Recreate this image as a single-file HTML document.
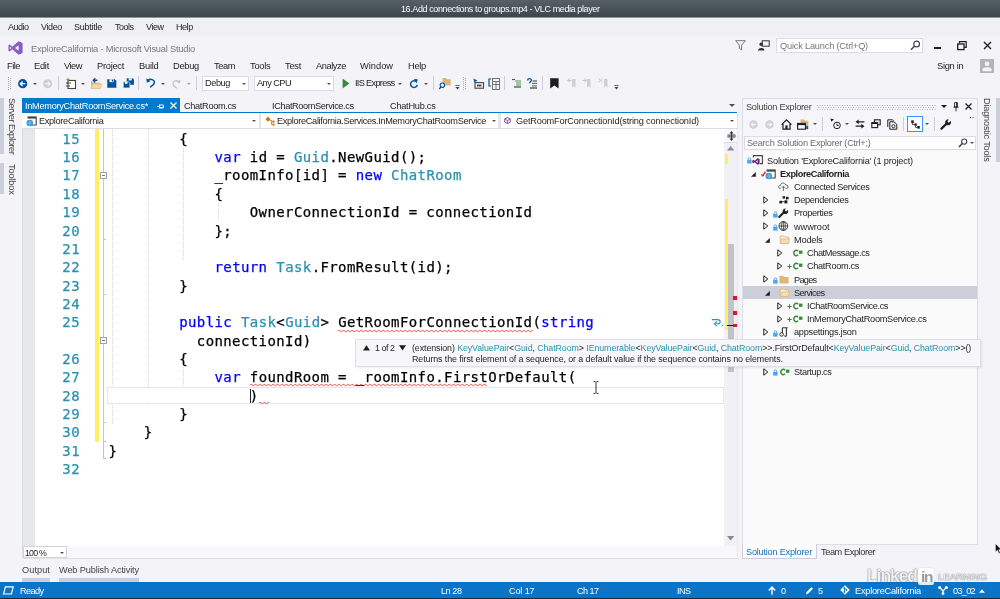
<!DOCTYPE html>
<html><head><meta charset="utf-8"><title>VLC media player</title>
<style>
html,body{margin:0;padding:0;}
body{width:1000px;height:599px;overflow:hidden;position:relative;background:#f4f4f8;font-family:"Liberation Sans",sans-serif;font-size:9.2px;color:#1e1e1e;}
.a{position:absolute;}
.t{position:absolute;white-space:nowrap;line-height:12px;height:12px;will-change:transform;}
.t i{font-style:normal;color:#2b91af;}
svg{position:absolute;overflow:visible;}
#code{will-change:transform;-webkit-text-stroke:0.25px;font-family:"DejaVu Sans Mono","Liberation Mono",monospace;font-size:14px;letter-spacing:0.401px;color:#000;}
.ln{position:absolute;left:30px;width:50px;text-align:right;color:#2b91af;height:18.355px;line-height:18.355px;white-space:pre;}
.cl{position:absolute;left:108.5px;height:18.355px;line-height:18.355px;white-space:pre;color:#000;}
.k{color:#0000ff;}
.ty{color:#2b91af;}
.sep{position:absolute;width:1px;height:14px;top:76px;background:#cccedb;}
.dd{position:absolute;width:0;height:0;border-left:2.2px solid transparent;border-right:2.2px solid transparent;border-top:2.6px solid #505050;margin-left:0.3px;margin-top:0.2px;}
.ig{position:absolute;width:0;border-left:1px dotted #d8d8d8;}
</style></head><body>
<!-- VLC chrome -->
<div class="a" style="left:0;top:0;width:1000px;height:17px;background:linear-gradient(#566068,#3e464c)"></div>
<div class="a" style="left:0;top:17px;width:1000px;height:1px;background:#3daee9"></div>
<div class="a" style="left:0;top:18px;width:1000px;height:18px;background:#eff0f1"></div>
<!-- VS logo -->
<svg style="left:8px;top:41px" width="15" height="14" viewBox="0 0 15 14"><path d="M10.6 0.3 L14.6 1.9 L14.6 12.1 L10.6 13.7 L4.3 8.3 L1.6 10.4 L0.4 9.8 L0.4 4.2 L1.6 3.6 L4.3 5.7 Z M10.6 4.2 L7 7 L10.6 9.8 Z M1.7 5.5 L1.7 8.5 L3.3 7 Z" fill="#865fc5" fill-rule="evenodd"/></svg>

<!-- title right controls -->
<svg style="left:735px;top:40px" width="11" height="11" viewBox="0 0 11 11"><path d="M0.7 0.7 H10.3 L6.6 5.2 V9.8 L4.4 8.4 V5.2 Z" fill="none" stroke="#6a6a6a" stroke-width="0.9"/></svg>
<svg style="left:758px;top:40px" width="12" height="11" viewBox="0 0 12 11"><rect x="4.2" y="0.8" width="7" height="5.4" fill="none" stroke="#333" stroke-width="1"/><circle cx="3.2" cy="4.2" r="1.8" fill="#333"/><path d="M0 10.5 C0 7 6.4 7 6.4 10.5 Z" fill="#333"/></svg>
<div class="a" style="left:776px;top:37.5px;width:147px;height:15px;background:#fff;border:0.8px solid #dcdce4;box-sizing:border-box"></div>
<svg style="left:910px;top:40px" width="11" height="11" viewBox="0 0 11 11"><circle cx="6.6" cy="4" r="2.9" fill="none" stroke="#444" stroke-width="1.2"/><path d="M4.6 6 L1 9.8" stroke="#444" stroke-width="1.5"/></svg>
<div class="a" style="left:934px;top:46.5px;width:7px;height:2px;background:#1e1e1e"></div>
<svg style="left:957px;top:41px" width="10" height="10" viewBox="0 0 10 10"><path d="M2.5 2.5 V0.7 H9.2 V6.3 H7.3" fill="none" stroke="#1e1e1e" stroke-width="1.2"/><rect x="0.7" y="3" width="6.3" height="5.6" fill="none" stroke="#1e1e1e" stroke-width="1.3"/></svg>
<svg style="left:983px;top:41px" width="9" height="9" viewBox="0 0 9 9"><path d="M1 1 L8 8 M8 1 L1 8" stroke="#1e1e1e" stroke-width="1.4"/></svg>
<svg style="left:980px;top:59px" width="14" height="14" viewBox="0 0 14 14"><rect x="0" y="0" width="14" height="14" fill="#b4b4b8"/><circle cx="7" cy="4.8" r="2.4" fill="#f4f4f6"/><path d="M2.4 12.2 V10 C2.4 7.5 11.6 7.5 11.6 10 V12.2 Z" fill="#f4f4f6"/></svg>
<!-- toolbar -->
<svg style="left:8px;top:77px" width="4" height="13" viewBox="0 0 4 13"><path d="M0.5 0 V13 M2.5 1 V13" stroke="#a8a8b4" stroke-width="1" stroke-dasharray="1 1"/></svg>
<svg style="left:18.2px;top:79px" width="9.4" height="9.4" viewBox="0 0 10 10"><circle cx="5" cy="5" r="4.9" fill="#00539c"/><path d="M7.8 5 H2.8 M4.9 2.6 L2.5 5 L4.9 7.4" fill="none" stroke="#fff" stroke-width="1.4"/></svg>
<div class="dd" style="left:33px;top:82.5px"></div>
<svg style="left:43.2px;top:79px" width="9.4" height="9.4" viewBox="0 0 10 10"><circle cx="5" cy="5" r="4.8" fill="#d0d0d4"/><path d="M2.4 5 H7 M5.1 2.8 L7.3 5 L5.1 7.2" fill="none" stroke="#f4f4f8" stroke-width="1.3"/></svg>
<div class="sep" style="left:58px"></div>
<svg style="left:65px;top:77px" width="12" height="13" viewBox="0 0 12 13"><rect x="3" y="3.5" width="7.5" height="8" fill="#fff" stroke="#444" stroke-width="1.1"/><path d="M1 6 H6 M1 9 H5" stroke="#444" stroke-width="1.1"/><path d="M3 0.5 L3.8 2.2 L5.6 2.6 L3.8 3.2 L3 5 L2.2 3.2 L0.4 2.6 L2.2 2.2 Z" fill="#c27d1a"/></svg>
<div class="dd" style="left:81px;top:82.5px"></div>
<svg style="left:90px;top:77px" width="12" height="13" viewBox="0 0 12 13"><path d="M1 4.5 H5 L6 5.8 H10.5 V11.5 H1 Z" fill="#dcb67a"/><path d="M2.5 7 H11.8 L10.3 11.5 H1 Z" fill="#f0d9a8" stroke="#dcb67a" stroke-width="0.5"/><path d="M7.5 3.2 H3.6 M5.2 1.3 L3.3 3.2 L5.2 5.1" fill="none" stroke="#00539c" stroke-width="1.4"/></svg>
<svg style="left:107.4px;top:79px" width="9.6" height="9" viewBox="0 0 11 11" preserveAspectRatio="none"><path d="M0.3 0.3 H9 L10.7 2 V10.7 H0.3 Z" fill="#00539c"/><rect x="2.8" y="0.3" width="5" height="3.6" fill="#f4f4f8"/><rect x="5.6" y="0.8" width="1.5" height="2.4" fill="#00539c"/></svg>
<svg style="left:122.6px;top:78px" width="11.2" height="10.2" viewBox="0 0 13 13" preserveAspectRatio="none"><path d="M4.3 0.3 H11 L12.7 2 V8.7 H4.3 Z" fill="#00539c"/><rect x="6.6" y="0.3" width="3.6" height="2.8" fill="#f4f4f8"/><path d="M0.3 4.8 H6.5 L8 6.3 V12.7 H0.3 Z" fill="#00539c" stroke="#f4f4f8" stroke-width="0.8"/><rect x="2.2" y="4.8" width="3" height="2.6" fill="#f4f4f8"/></svg>
<div class="sep" style="left:138px"></div>
<svg style="left:145.6px;top:78.4px" width="9.6" height="10" viewBox="0 0 11 12" preserveAspectRatio="none"><path d="M2 2.6 C5.5 0.6 9.6 2 9.6 5.2 C9.6 8 7.2 9.4 4.6 11" fill="none" stroke="#00539c" stroke-width="1.8"/><path d="M0.4 0.6 L0.9 5.6 L5.4 3.6 Z" fill="#00539c"/></svg>
<div class="dd" style="left:161px;top:82.5px"></div>
<svg style="left:172px;top:78.5px" width="9" height="10" viewBox="0 0 9 10"><path d="M7 2.4 C4.4 0.8 1 2 1 4.6 C1 6.8 2.8 8 4.8 9.2" fill="none" stroke="#c4c4c8" stroke-width="1.3"/><path d="M8.4 0.4 L8 4.6 L4.4 3 Z" fill="#c4c4c8"/></svg>
<div class="dd" style="left:187px;top:82.5px;border-top-color:#a0a0a6"></div>
<div class="sep" style="left:196px"></div>
<div class="a" style="left:202px;top:76px;width:47px;height:15px;background:#fff;border:0.8px solid #dcdce4;box-sizing:border-box"></div>
<div class="dd" style="left:241.5px;top:82.5px"></div>
<div class="a" style="left:254px;top:76px;width:80px;height:15px;background:#fff;border:0.8px solid #dcdce4;box-sizing:border-box"></div>
<div class="dd" style="left:326.5px;top:82.5px"></div>
<svg style="left:342px;top:78px" width="8" height="11" viewBox="0 0 8 11"><path d="M0.6 0.4 L7.4 5.5 L0.6 10.6 Z" fill="#388a34"/></svg>
<div class="dd" style="left:398px;top:82.5px"></div>
<svg style="left:409px;top:78.6px" width="9.8" height="9.8" viewBox="0 0 11 11"><path d="M8.6 3.4 A3.8 3.8 0 1 0 9.3 6.6" fill="none" stroke="#00539c" stroke-width="1.7"/><path d="M5.4 0 L9.8 0.4 L8.8 4.8 Z" fill="#00539c"/></svg>
<div class="dd" style="left:423.5px;top:82.5px"></div>
<div class="sep" style="left:433px"></div>
<svg style="left:439px;top:77px" width="12" height="13" viewBox="0 0 12 13"><path d="M3.5 1 H7 L8 2.2 H11.7 V8.5 H3.5 Z" fill="#dcb67a"/><circle cx="3.4" cy="8.2" r="2.2" fill="#f4f4f8" stroke="#00539c" stroke-width="1.1"/><path d="M1.9 9.8 L0.3 12" stroke="#00539c" stroke-width="1.3"/></svg>
<svg style="left:455.4px;top:85.2px" width="5" height="5" viewBox="0 0 6 6"><path d="M0.5 0.6 H5.5" stroke="#444" stroke-width="1"/><path d="M0.5 2.4 H5.5 L3 5.4 Z" fill="#444"/></svg>
<svg style="left:463px;top:77px" width="4" height="13" viewBox="0 0 4 13"><path d="M0.5 0 V13 M2.5 1 V13" stroke="#a8a8b4" stroke-width="1" stroke-dasharray="1 1"/></svg>
<svg style="left:473px;top:78px" width="11" height="11" viewBox="0 0 11 11"><rect x="2" y="4.6" width="8.5" height="5.6" fill="none" stroke="#444" stroke-width="1.1"/><rect x="4" y="6.6" width="4.5" height="1.8" fill="#444"/><path d="M0.4 0.4 L4.4 2.6 L1.4 4.4 Z" fill="#00539c"/></svg>
<svg style="left:488px;top:77.5px" width="12" height="12" viewBox="0 0 12 12"><path d="M3 1 H1 V8 H3" fill="none" stroke="#00539c" stroke-width="1.2"/><rect x="4.5" y="0.5" width="7" height="11" fill="none" stroke="#666" stroke-width="0.9"/><path d="M4.5 3.5 H11.5 M4.5 6.5 H11.5 M8 3.5 V11.5" stroke="#666" stroke-width="0.9"/></svg>
<div class="sep" style="left:504px"></div>
<svg style="left:512px;top:78.5px" width="10" height="9" viewBox="0 0 10 9"><path d="M0 0.6 H3" stroke="#444" stroke-width="1"/><path d="M3 2 H9 M4 4 H9 M4 6 H9" stroke="#4a9a54" stroke-width="1.2"/><path d="M2 8 H9" stroke="#444" stroke-width="1.2"/></svg>
<svg style="left:527px;top:77.5px" width="11" height="11" viewBox="0 0 11 11"><path d="M0.6 2.4 C0.6 0.2 4.4 0.2 4.4 2.2 C4.4 3.6 2.6 3.6 2.6 5.2" fill="none" stroke="#00539c" stroke-width="1.3"/><path d="M5.6 3 H10 M5 5.4 H10 M5 7.8 H10" stroke="#777" stroke-width="1.3"/><path d="M3 10 H10" stroke="#444" stroke-width="1.3"/></svg>
<div class="sep" style="left:542px"></div>
<svg style="left:549.5px;top:78px" width="9" height="11" viewBox="0 0 9 11"><path d="M0.2 0.2 H8.6 V10.6 L4.4 7.4 L0.2 10.6 Z" fill="#1e1e1e"/></svg>
<svg style="left:567px;top:78px" width="9" height="10" viewBox="0 0 9 10"><path d="M5 1 H8.5 V9.5 L6.7 8 L5 9.5 Z" fill="#d0d0d4"/><path d="M4.6 2.4 H0.8 M2.6 0.6 L0.6 2.4 L2.6 4.2" fill="none" stroke="#c4c4c8" stroke-width="1"/></svg>
<svg style="left:582px;top:78px" width="9" height="10" viewBox="0 0 9 10"><path d="M5 1 H8.5 V9.5 L6.7 8 L5 9.5 Z" fill="#d0d0d4"/><path d="M0.4 2.4 H4.2 M2.4 0.6 L4.4 2.4 L2.4 4.2" fill="none" stroke="#c4c4c8" stroke-width="1"/></svg>
<svg style="left:598px;top:78px" width="10" height="10" viewBox="0 0 10 10"><path d="M6 1 H9.5 V9.5 L7.7 8 L6 9.5 Z" fill="#d0d0d4"/><path d="M0.6 0.6 L4.6 4.2 M0.6 4.2 L4.6 0.6" fill="none" stroke="#c4c4c8" stroke-width="1"/></svg>
<svg style="left:613.8px;top:85.2px" width="5" height="5" viewBox="0 0 6 6"><path d="M0.5 0.6 H5.5" stroke="#444" stroke-width="1"/><path d="M0.5 2.4 H5.5 L3 5.4 Z" fill="#444"/></svg>


<!-- left strip -->
<div class="a" style="left:0;top:98px;width:3.5px;height:56.4px;background:#ccceda"></div>
<div class="a" style="left:0;top:163.4px;width:3.5px;height:30.8px;background:#ccceda"></div>
<!-- tab strip -->
<div class="a" style="left:22px;top:98px;width:158px;height:15px;background:#007acc"></div>
<div class="a" style="left:22px;top:112px;width:715px;height:1.4px;background:#007acc"></div>
<svg style="left:157px;top:102.5px" width="7" height="7" viewBox="0 0 7 7"><path d="M0 3.5 H2.4 M2.6 1.4 V5.6 M2.6 2 H6.4 V4.6 H2.6 M2.6 5 H6.4" fill="none" stroke="#fff" stroke-width="0.9"/></svg>
<svg style="left:170px;top:102.3px" width="7" height="7" viewBox="0 0 7 7"><path d="M0.5 0.5 L6.5 6.5 M6.5 0.5 L0.5 6.5" stroke="#fff" stroke-width="1.2"/></svg>
<div class="dd" style="left:728.8px;top:104px;border-left-width:3px;border-right-width:3px;border-top-width:3.2px"></div>
<!-- nav bar -->
<div class="a" style="left:22px;top:113.4px;width:715px;height:15px;background:#fff;border-bottom:1px solid #dcdce6"></div>
<div class="a" style="left:258.5px;top:113.4px;width:2.5px;height:15px;background:#e4e4ec"></div>
<div class="a" style="left:498px;top:113.4px;width:2.5px;height:15px;background:#e4e4ec"></div>
<svg style="left:26px;top:115.5px" width="11" height="11" viewBox="0 0 11 11"><path d="M1.6 1 H10.2 V9 H6" fill="none" stroke="#444" stroke-width="1.1"/><path d="M1.6 0.8 H10.2 V2.6 H1.6 Z" fill="#444"/><circle cx="3.8" cy="7" r="3.3" fill="#3a9ad9"/><path d="M1 7 H6.6 M3.8 3.8 V10.2" stroke="#9fd0f0" stroke-width="0.6"/></svg>
<div class="dd" style="left:252px;top:120px;border-left-width:2.2px;border-right-width:2.2px;border-top-width:2.6px"></div>
<svg style="left:264.5px;top:115.5px" width="10" height="11" viewBox="0 0 10 11"><path d="M0.4 3.2 L3 0.6 L5.6 3.2 L3 5.8 Z" fill="#c27d1a"/><path d="M4.6 4.4 H6.6 V8.6 H8 M6.6 5.6 H8" fill="none" stroke="#c27d1a" stroke-width="0.9"/><rect x="7.6" y="4.6" width="2" height="2" fill="#c27d1a"/><rect x="7.6" y="7.6" width="2" height="2" fill="#c27d1a"/></svg>
<div class="dd" style="left:491.5px;top:120px;border-left-width:2.2px;border-right-width:2.2px;border-top-width:2.6px"></div>
<svg style="left:503.8px;top:117px" width="7" height="7" viewBox="0 0 8 8"><path d="M4 0.5 L7.2 2.2 V5.8 L4 7.5 L0.8 5.8 V2.2 Z" fill="#f3e9f7" stroke="#7a3e9d" stroke-width="1"/><path d="M0.8 2.2 L4 4 L7.2 2.2 M4 4 V7.5" fill="none" stroke="#7a3e9d" stroke-width="0.8"/></svg>
<div class="dd" style="left:729.5px;top:120px;border-left-width:2.2px;border-right-width:2.2px;border-top-width:2.6px"></div>


<!-- editor -->
<div class="a" style="left:22px;top:129px;width:715px;height:417px;background:#fff"></div>
<div class="a" style="left:22px;top:129px;width:1px;height:429px;background:#dcdce6"></div>
<div class="a" style="left:23px;top:129px;width:12px;height:417px;background:#e6e7e8"></div>
<div class="a" style="left:95px;top:129px;width:3.6px;height:312.5px;background:#ffee62"></div>
<div class="a" style="left:103.2px;top:129px;width:1px;height:329px;background:#c4c4c4"></div>
<div class="a" style="left:103.2px;top:239px;width:3px;height:1px;background:#c4c4c4"></div>
<div class="a" style="left:103.2px;top:294px;width:3px;height:1px;background:#c4c4c4"></div>
<div class="a" style="left:103.2px;top:422.4px;width:3px;height:1px;background:#c4c4c4"></div>
<div class="a" style="left:103.2px;top:440.6px;width:3px;height:1px;background:#c4c4c4"></div>
<div class="a" style="left:103.2px;top:458.4px;width:3px;height:1px;background:#c4c4c4"></div>
<div class="a" style="left:100.1px;top:172.2px;width:7px;height:7px;background:#fff;border:0.9px solid #a0a0a0;box-sizing:border-box"></div>
<div class="a" style="left:101.8px;top:175.2px;width:3.6px;height:1px;background:#777"></div>
<div class="a" style="left:100.1px;top:337.2px;width:7px;height:7px;background:#fff;border:0.9px solid #a0a0a0;box-sizing:border-box"></div>
<div class="a" style="left:101.8px;top:340.2px;width:3.6px;height:1px;background:#777"></div>
<!-- indent guides -->
<div class="ig" style="left:112px;top:129px;height:295px"></div>
<div class="ig" style="left:147.5px;top:129px;height:276px"></div>
<div class="ig" style="left:183px;top:148px;height:112px"></div>
<div class="ig" style="left:183px;top:367px;height:37px"></div>
<div class="ig" style="left:218.3px;top:203px;height:18px"></div>
<!-- current line -->
<div class="a" style="left:106.5px;top:386.6px;width:617px;height:17.8px;border:1px solid #e6e6f0;box-sizing:border-box;background:#fff"></div>
<div class="a" style="left:249.6px;top:388.5px;width:1px;height:14.5px;background:#222"></div>
<!-- squiggles -->
<svg style="left:338px;top:328.5px" width="194" height="4" viewBox="0 0 194 4"><defs><pattern id="sq" width="4" height="4" patternUnits="userSpaceOnUse"><path d="M0 2.6 L1 1.4 L3 2.6 L4 2.6" fill="none" stroke="#e86a6a" stroke-width="0.9"/></pattern><pattern id="sq2" width="4.4" height="4" patternUnits="userSpaceOnUse"><path d="M0 2 Q1.1 0.4 2.2 2 T4.4 2" fill="none" stroke="#e66" stroke-width="0.9"/></pattern></defs><rect width="195" height="4" fill="url(#sq2)"/></svg>
<svg style="left:250px;top:383.4px" width="237" height="4" viewBox="0 0 237 4"><rect width="237" height="4" fill="url(#sq2)"/></svg>
<svg style="left:259px;top:401px" width="10" height="4" viewBox="0 0 10 4"><rect width="10" height="4" fill="url(#sq2)"/></svg>
<!-- word wrap glyph -->
<svg style="left:711px;top:318px" width="12" height="9" viewBox="0 0 12 9"><path d="M0.8 1.6 H6.6 C10 1.6 10 5.8 6.6 5.8 H4.6" fill="none" stroke="#2b91af" stroke-width="1.1"/><path d="M6 3.4 L3.2 5.8 L6 8.2" fill="none" stroke="#2b91af" stroke-width="1.1"/><rect x="10.8" y="6.6" width="1.2" height="1.2" fill="#2b91af"/></svg>
<!-- mouse I-beam -->
<svg style="left:592.8px;top:380.6px" width="6" height="13" viewBox="0 0 6 13"><path d="M0.5 0.6 H2.4 M3.6 0.6 H5.5 M3 0.8 V12.2 M0.5 12.4 H2.4 M3.6 12.4 H5.5" fill="none" stroke="#333" stroke-width="1"/></svg>
<!-- code -->
<div id="code">
<div class="ln" style="top:129.77px">15</div>
<div class="cl" style="top:129.77px">        {</div>
<div class="ln" style="top:148.13px">16</div>
<div class="cl" style="top:148.13px">            <span class="k">var</span> id = <span class="ty">Guid</span>.NewGuid();</div>
<div class="ln" style="top:166.48px">17</div>
<div class="cl" style="top:166.48px">            _roomInfo[id] = <span class="k">new</span> <span class="ty">ChatRoom</span></div>
<div class="ln" style="top:184.84px">18</div>
<div class="cl" style="top:184.84px">            {</div>
<div class="ln" style="top:203.19px">19</div>
<div class="cl" style="top:203.19px">                OwnerConnectionId = connectionId</div>
<div class="ln" style="top:221.55px">20</div>
<div class="cl" style="top:221.55px">            };</div>
<div class="ln" style="top:239.90px">21</div>
<div class="ln" style="top:258.26px">22</div>
<div class="cl" style="top:258.26px">            <span class="k">return</span> <span class="ty">Task</span>.FromResult(id);</div>
<div class="ln" style="top:276.61px">23</div>
<div class="cl" style="top:276.61px">        }</div>
<div class="ln" style="top:294.97px">24</div>
<div class="ln" style="top:313.32px">25</div>
<div class="cl" style="top:313.32px">        <span class="k">public</span> <span class="ty">Task</span>&lt;<span class="ty">Guid</span>&gt; GetRoomForConnectionId(<span class="k">string</span></div>
<div class="cl" style="top:331.68px">          connectionId)</div>
<div class="ln" style="top:350.03px">26</div>
<div class="cl" style="top:350.03px">        {</div>
<div class="ln" style="top:368.39px">27</div>
<div class="cl" style="top:368.39px">            <span class="k">var</span> foundRoom = _roomInfo.FirstOrDefault(</div>
<div class="ln" style="top:386.74px">28</div>
<div class="cl" style="top:386.74px">                )</div>
<div class="ln" style="top:405.10px">29</div>
<div class="cl" style="top:405.10px">        }</div>
<div class="ln" style="top:423.45px">30</div>
<div class="cl" style="top:423.45px">    }</div>
<div class="ln" style="top:441.81px">31</div>
<div class="cl" style="top:441.81px">}</div>
<div class="ln" style="top:460.16px">32</div>
</div>
<!-- vertical scrollbar -->
<div class="a" style="left:724px;top:129px;width:13px;height:417px;background:#f1f1f5"></div>
<div class="a" style="left:724px;top:129px;width:13px;height:12.5px;background:#fafafc;border-bottom:1px solid #dcdce6"></div>
<svg style="left:726.5px;top:130.5px" width="9" height="10" viewBox="0 0 9 10"><path d="M4.5 0 L6.6 2.4 H2.4 Z M4.5 10 L6.6 7.6 H2.4 Z" fill="#333"/><path d="M4.5 2 V8 M0.4 4.1 H8.6 M0.4 5.9 H8.6" stroke="#333" stroke-width="1"/></svg>
<svg style="left:727px;top:146px" width="7.4" height="4.4" viewBox="0 0 7.4 4.4"><path d="M0 4.4 L3.7 0 L7.4 4.4 Z" fill="#868999"/></svg>
<svg style="left:727px;top:535.5px" width="7.4" height="4.4" viewBox="0 0 7.4 4.4"><path d="M0 0 L3.7 4.4 L7.4 0 Z" fill="#868999"/></svg>
<div class="a" style="left:725.4px;top:154.4px;width:2.8px;height:9.6px;background:#ffee62"></div>
<div class="a" style="left:725.4px;top:199px;width:2.8px;height:130.6px;background:#ffee62"></div>
<div class="a" style="left:727.7px;top:244px;width:6px;height:127.6px;background:#c2c3c9"></div>
<div class="a" style="left:733px;top:296px;width:3.8px;height:3.6px;background:#e8112d"></div>
<div class="a" style="left:733px;top:311px;width:3.8px;height:3.8px;background:#e8112d"></div>
<div class="a" style="left:733px;top:323.6px;width:3.8px;height:3.8px;background:#e8112d"></div>
<div class="a" style="left:727px;top:324.6px;width:6px;height:1.2px;background:#00008b"></div>
<div class="a" style="left:737px;top:113px;width:1px;height:446px;background:#e6e6ee"></div>
<!-- bottom row -->
<div class="a" style="left:23px;top:546.2px;width:714px;height:12.6px;background:#f8f8fa;border-bottom:1px solid #e0e0e8;box-sizing:border-box"></div>
<div class="a" style="left:23px;top:546px;width:43.5px;height:12px;background:#fff;border:1px solid #d4d4dc;box-sizing:border-box"></div>
<div class="dd" style="left:60px;top:551.5px;border-left-width:2px;border-right-width:2px;border-top-width:2.4px"></div>
<div class="a" style="left:22px;top:578px;width:28px;height:4px;background:#ccceda"></div>
<div class="a" style="left:59px;top:578px;width:80px;height:4px;background:#ccceda"></div>


<!-- solution explorer -->
<div class="a" style="left:742px;top:98px;width:236px;height:447px;background:#f6f6fa;border:1px solid #dcdde6;box-sizing:border-box"></div>
<svg style="left:817px;top:104.5px" width="119" height="5" viewBox="0 0 119 5"><path d="M0 0.5 H119 M1 2.5 H119 M0 4.5 H119" stroke="#b4b4c0" stroke-width="1" stroke-dasharray="1 1.5"/></svg>
<div class="dd" style="left:940.5px;top:105px;border-left-width:3px;border-right-width:3px;border-top-width:3.4px;border-top-color:#1e1e1e"></div>
<svg style="left:953px;top:102px" width="6" height="10" viewBox="0 0 6 10"><path d="M1.6 0.6 H4.4 V5 H1.6 Z M3.6 0.6 V5 M0.4 5.2 H5.6 M3 5.2 V9.4" fill="none" stroke="#1e1e1e" stroke-width="0.9"/></svg>
<svg style="left:965px;top:103px" width="7" height="7" viewBox="0 0 7 7"><path d="M0.5 0.5 L6.5 6.5 M6.5 0.5 L0.5 6.5" stroke="#1e1e1e" stroke-width="1.3"/></svg>
<!-- SE toolbar -->
<svg style="left:749px;top:119.5px" width="9" height="9" viewBox="0 0 9 9"><circle cx="4.5" cy="4.5" r="4.3" fill="#d2d2d6"/><path d="M6.8 4.5 H2.8 M4.4 2.6 L2.5 4.5 L4.4 6.4" fill="none" stroke="#f6f6fa" stroke-width="1.2"/></svg>
<svg style="left:765px;top:119.5px" width="9" height="9" viewBox="0 0 9 9"><circle cx="4.5" cy="4.5" r="4.3" fill="#d2d2d6"/><path d="M2.2 4.5 H6.2 M4.6 2.6 L6.5 4.5 L4.6 6.4" fill="none" stroke="#f6f6fa" stroke-width="1.2"/></svg>
<svg style="left:781px;top:118.5px" width="11" height="11" viewBox="0 0 11 11"><path d="M0.6 5.6 L5.5 0.8 L10.4 5.6 M2 4.8 V10.2 H9 V4.8" fill="none" stroke="#1e1e1e" stroke-width="1.2"/><rect x="4.4" y="6.4" width="2.2" height="3.8" fill="#1e1e1e"/></svg>
<svg style="left:797px;top:118.5px" width="12" height="11" viewBox="0 0 12 11"><path d="M3.6 0.6 H7 L8 1.8 H11.4 V6 H3.6 Z" fill="#dcb67a"/><rect x="0.6" y="4.4" width="7.8" height="5.8" fill="#f5f5f9" stroke="#1e1e1e" stroke-width="1.1"/><path d="M0.6 5.4 H8.4" stroke="#1e1e1e" stroke-width="1.4"/><rect x="9.2" y="6.6" width="2" height="3.6" fill="#00539c"/></svg>
<div class="dd" style="left:813px;top:123px;border-left-width:2.2px;border-right-width:2.2px;border-top-width:2.6px"></div>
<div class="sep" style="left:822px;top:117px"></div>
<svg style="left:830px;top:117.5px" width="12" height="12" viewBox="0 0 12 12"><circle cx="7" cy="7.4" r="3.3" fill="none" stroke="#1e1e1e" stroke-width="1"/><path d="M7 5.6 V7.6 H8.6" fill="none" stroke="#1e1e1e" stroke-width="1"/><path d="M0.4 0.4 L4 1.2 L1.4 3.8 Z" fill="#1e1e1e"/></svg>
<div class="dd" style="left:845px;top:123px;border-left-width:2.2px;border-right-width:2.2px;border-top-width:2.6px"></div>
<svg style="left:855px;top:119px" width="10" height="10" viewBox="0 0 10 10"><path d="M2 2.8 H9.4 M0.6 7.2 H8" stroke="#1e1e1e" stroke-width="1.3"/><path d="M3.6 0.4 L0.6 2.8 L3.6 5.2 Z M6.4 4.8 L9.4 7.2 L6.4 9.6 Z" fill="#1e1e1e"/></svg>
<svg style="left:871px;top:119px" width="10" height="10" viewBox="0 0 10 10"><rect x="3.4" y="0.8" width="5.8" height="5" fill="#f5f5f9" stroke="#1e1e1e" stroke-width="1.1"/><rect x="0.8" y="3.6" width="5.8" height="5" fill="#f5f5f9" stroke="#1e1e1e" stroke-width="1.1"/><path d="M0.8 4.4 H6.6" stroke="#1e1e1e" stroke-width="1.2"/></svg>
<svg style="left:887px;top:118.5px" width="11" height="11" viewBox="0 0 11 11"><path d="M0.8 8 V0.8 H5.4 L7 2.4" fill="none" stroke="#1e1e1e" stroke-width="1"/><path d="M2.8 10.2 V2.8 H7 L9.8 5.4 V10.2 Z" fill="#f5f5f9" stroke="#1e1e1e" stroke-width="1"/><circle cx="6.4" cy="7.2" r="1.6" fill="none" stroke="#1e1e1e" stroke-width="0.9"/></svg>
<div class="sep" style="left:903px;top:117px"></div>
<div class="a" style="left:907px;top:116px;width:15.5px;height:16px;background:#fdfdff;border:1px solid #3399ff;box-sizing:border-box"></div>
<svg style="left:910.5px;top:119.5px" width="9" height="9" viewBox="0 0 9 9"><rect x="0.2" y="0.4" width="2.6" height="2.6" fill="#1e1e1e"/><rect x="3.4" y="3.4" width="2.4" height="2.4" fill="#1e1e1e"/><rect x="6.2" y="6" width="2.6" height="2.6" fill="#1e1e1e"/><path d="M1.4 3 V4.6 H3.4 M4.6 5.8 V7.4 H6.2" fill="none" stroke="#1e1e1e" stroke-width="0.8"/></svg>
<div class="dd" style="left:925px;top:123px;border-left-width:2.2px;border-right-width:2.2px;border-top-width:2.6px"></div>
<div class="sep" style="left:934px;top:117px"></div>
<svg style="left:940px;top:118.5px" width="12" height="11" viewBox="0 0 12 11"><path d="M1.4 9.8 L6.6 4.6" stroke="#1e1e1e" stroke-width="2.2" stroke-linecap="round"/><path d="M10.8 2 A3 3 0 1 1 8.6 0.4 L7.4 2.6 L8.8 3.8 Z" fill="#1e1e1e"/></svg>
<svg style="left:970.2px;top:116.8px" width="4" height="2" viewBox="0 0 4 2"><rect x="0" y="0" width="1" height="1.2" fill="#555"/><rect x="2.6" y="0" width="1" height="1.2" fill="#555"/></svg>
<!-- SE search -->
<div class="a" style="left:744px;top:135.5px;width:232px;height:14.5px;background:#fff;border:1px solid #dcdce6;box-sizing:border-box"></div>
<svg style="left:957.5px;top:137.5px" width="10" height="10" viewBox="0 0 10 10"><circle cx="6.2" cy="3.6" r="2.6" fill="none" stroke="#444" stroke-width="1.1"/><path d="M4.2 5.6 L1 9" stroke="#444" stroke-width="1.5"/></svg>
<div class="dd" style="left:970px;top:141.5px;border-left-width:2px;border-right-width:2px;border-top-width:2.4px"></div>
<!-- SE tree -->
<div class="a" style="left:743px;top:151px;width:233.5px;height:392.5px;background:#fafafb"></div>
<div class="a" style="left:743px;top:285.7px;width:233.5px;height:13.2px;background:#ccceda"></div>
<svg style="left:746.5px;top:157.3px" width="5" height="7" viewBox="0 0 5 7"><rect x="0.2" y="2.8" width="4.4" height="3.8" fill="#48a6ec"/><path d="M1.2 2.8 V1.8 C1.2 0.4 3.6 0.4 3.6 1.8 V2.8" fill="none" stroke="#48a6ec" stroke-width="0.9"/></svg><svg style="left:752px;top:155.3px" width="11" height="10" viewBox="0 0 11 10"><path d="M1.4 2.4 V0.6 H10.4 V8.6 H8" fill="none" stroke="#444" stroke-width="1.1"/><path d="M5.6 3.2 L7.6 4 V9 L5.6 9.8 L2.6 7.2 L1.2 8.2 L0.4 7.8 V5.2 L1.2 4.8 L2.6 5.8 Z M5.6 5 L3.8 6.5 L5.6 8 Z" fill="#68217a" fill-rule="evenodd"/></svg><svg style="left:750.5px;top:171.5px" width="5" height="5" viewBox="0 0 5 5"><path d="M4.8 0 V4.8 H0 Z" fill="#1e1e1e"/></svg><svg style="left:760.5px;top:170.5px" width="5" height="6" viewBox="0 0 5 6"><path d="M0.4 3.4 L1.8 5 L4.4 0.6" fill="none" stroke="#e51400" stroke-width="1.2"/></svg><svg style="left:764.5px;top:169.0px" width="11" height="11" viewBox="0 0 11 11"><path d="M1.6 1 H10.2 V9 H6" fill="none" stroke="#444" stroke-width="1.1"/><path d="M1.6 0.8 H10.2 V2.6 H1.6 Z" fill="#444"/><circle cx="3.8" cy="7" r="3.3" fill="#3a9ad9"/><path d="M1 7 H6.6 M3.8 3.8 V10.2" stroke="#9fd0f0" stroke-width="0.6"/></svg><svg style="left:778px;top:182.2px" width="11" height="9" viewBox="0 0 11 9"><path d="M3 6.6 H2.4 C0 6.6 0 3.4 2.4 3.4 C2.6 0.6 6.8 0.2 7.6 2.8 C10.6 2.6 10.8 6.6 8.4 6.6 H7.6" fill="none" stroke="#555" stroke-width="0.9"/><path d="M5.4 8.8 V4.4 M3.8 5.8 L5.4 4.2 L7 5.8" fill="none" stroke="#555" stroke-width="0.9"/></svg><svg style="left:762.5px;top:196.0px" width="6" height="8" viewBox="0 0 6 8"><path d="M0.8 0.8 L4.8 4 L0.8 7.2 Z" fill="#fff" stroke="#1e1e1e" stroke-width="1"/></svg><svg style="left:779px;top:196.0px" width="10" height="8" viewBox="0 0 10 8"><rect x="3.6" y="0.2" width="2.6" height="2.4" fill="#1e1e1e"/><rect x="7" y="0.8" width="2.6" height="2.4" fill="#1e1e1e"/><rect x="0.4" y="4.8" width="2.8" height="2.6" fill="#1e1e1e"/><rect x="5.4" y="4.4" width="3" height="3" fill="#1e1e1e"/><path d="M3 5.6 L5.4 5.6 M6.6 4.4 L7.8 3.2" stroke="#1e1e1e" stroke-width="0.7"/></svg><svg style="left:762.5px;top:209.2px" width="6" height="8" viewBox="0 0 6 8"><path d="M0.8 0.8 L4.8 4 L0.8 7.2 Z" fill="#fff" stroke="#1e1e1e" stroke-width="1"/></svg><svg style="left:773px;top:210.7px" width="5" height="7" viewBox="0 0 5 7"><rect x="0.2" y="2.8" width="4.4" height="3.8" fill="#48a6ec"/><path d="M1.2 2.8 V1.8 C1.2 0.4 3.6 0.4 3.6 1.8 V2.8" fill="none" stroke="#48a6ec" stroke-width="0.9"/></svg><svg style="left:778px;top:208.2px" width="11" height="10" viewBox="0 0 11 10"><path d="M1.2 9 L6 4.2" stroke="#1e1e1e" stroke-width="2" stroke-linecap="round"/><path d="M10 2 A2.8 2.8 0 1 1 7.8 0.4 L6.8 2.4 L8 3.6 Z" fill="#1e1e1e"/></svg><svg style="left:762.5px;top:222.4px" width="6" height="8" viewBox="0 0 6 8"><path d="M0.8 0.8 L4.8 4 L0.8 7.2 Z" fill="#fff" stroke="#1e1e1e" stroke-width="1"/></svg><svg style="left:773px;top:223.9px" width="5" height="7" viewBox="0 0 5 7"><rect x="0.2" y="2.8" width="4.4" height="3.8" fill="#48a6ec"/><path d="M1.2 2.8 V1.8 C1.2 0.4 3.6 0.4 3.6 1.8 V2.8" fill="none" stroke="#48a6ec" stroke-width="0.9"/></svg><svg style="left:778px;top:221.4px" width="11" height="10" viewBox="0 0 11 10"><circle cx="5.4" cy="5" r="4.4" fill="none" stroke="#333" stroke-width="1"/><ellipse cx="5.4" cy="5" rx="2" ry="4.4" fill="none" stroke="#333" stroke-width="0.8"/><path d="M1 5 H9.8 M5.4 0.6 V9.4" stroke="#333" stroke-width="0.8"/></svg><svg style="left:764.5px;top:237.6px" width="5" height="5" viewBox="0 0 5 5"><path d="M4.8 0 V4.8 H0 Z" fill="#1e1e1e"/></svg><svg style="left:778.5px;top:235.1px" width="11" height="9" viewBox="0 0 11 9"><path d="M1.2 1 H4.6 L5.6 2 H9.6 V8.4 H1.2 Z" fill="#fbf3e2" stroke="#dcb67a" stroke-width="0.9"/><path d="M2.6 4 H10.6 L9.4 8.4 H1.2 Z" fill="#f4dfb4" stroke="#dcb67a" stroke-width="0.7"/></svg><svg style="left:776.5px;top:248.8px" width="6" height="8" viewBox="0 0 6 8"><path d="M0.8 0.8 L4.8 4 L0.8 7.2 Z" fill="#fff" stroke="#1e1e1e" stroke-width="1"/></svg><svg style="left:792.5px;top:248.8px" width="10" height="8" viewBox="0 0 10 8"><path d="M5 2.2 C3.6 0.6 0.8 1.4 0.8 4 C0.8 6.6 3.6 7.4 5 5.8" fill="none" stroke="#388a34" stroke-width="1.5"/><rect x="6" y="1.6" width="3.4" height="3.2" fill="#388a34"/></svg><svg style="left:776.5px;top:262.1px" width="6" height="8" viewBox="0 0 6 8"><path d="M0.8 0.8 L4.8 4 L0.8 7.2 Z" fill="#fff" stroke="#1e1e1e" stroke-width="1"/></svg><svg style="left:786.5px;top:263.9px" width="5" height="5" viewBox="0 0 5 5"><path d="M2.5 0.3 V4.7 M0.3 2.5 H4.7" stroke="#388a34" stroke-width="1.1"/></svg><svg style="left:792.5px;top:262.1px" width="10" height="8" viewBox="0 0 10 8"><path d="M5 2.2 C3.6 0.6 0.8 1.4 0.8 4 C0.8 6.6 3.6 7.4 5 5.8" fill="none" stroke="#388a34" stroke-width="1.5"/><rect x="6" y="1.6" width="3.4" height="3.2" fill="#388a34"/></svg><svg style="left:762.5px;top:275.3px" width="6" height="8" viewBox="0 0 6 8"><path d="M0.8 0.8 L4.8 4 L0.8 7.2 Z" fill="#fff" stroke="#1e1e1e" stroke-width="1"/></svg><svg style="left:773px;top:276.8px" width="5" height="7" viewBox="0 0 5 7"><rect x="0.2" y="2.8" width="4.4" height="3.8" fill="#48a6ec"/><path d="M1.2 2.8 V1.8 C1.2 0.4 3.6 0.4 3.6 1.8 V2.8" fill="none" stroke="#48a6ec" stroke-width="0.9"/></svg><svg style="left:779px;top:274.8px" width="10" height="9" viewBox="0 0 10 9"><path d="M0.4 0.8 H4 L5 2 H9.6 V8.6 H0.4 Z" fill="#dcb67a"/></svg><svg style="left:764.5px;top:290.5px" width="5" height="5" viewBox="0 0 5 5"><path d="M4.8 0 V4.8 H0 Z" fill="#1e1e1e"/></svg><svg style="left:778.5px;top:288.0px" width="11" height="9" viewBox="0 0 11 9"><path d="M1.2 1 H4.6 L5.6 2 H9.6 V8.4 H1.2 Z" fill="#fbf3e2" stroke="#dcb67a" stroke-width="0.9"/><path d="M2.6 4 H10.6 L9.4 8.4 H1.2 Z" fill="#f4dfb4" stroke="#dcb67a" stroke-width="0.7"/></svg><svg style="left:776.5px;top:301.7px" width="6" height="8" viewBox="0 0 6 8"><path d="M0.8 0.8 L4.8 4 L0.8 7.2 Z" fill="#fff" stroke="#1e1e1e" stroke-width="1"/></svg><svg style="left:786.5px;top:303.5px" width="5" height="5" viewBox="0 0 5 5"><path d="M2.5 0.3 V4.7 M0.3 2.5 H4.7" stroke="#388a34" stroke-width="1.1"/></svg><svg style="left:792.5px;top:301.7px" width="10" height="8" viewBox="0 0 10 8"><path d="M5 2.2 C3.6 0.6 0.8 1.4 0.8 4 C0.8 6.6 3.6 7.4 5 5.8" fill="none" stroke="#388a34" stroke-width="1.5"/><rect x="6" y="1.6" width="3.4" height="3.2" fill="#388a34"/></svg><svg style="left:776.5px;top:314.9px" width="6" height="8" viewBox="0 0 6 8"><path d="M0.8 0.8 L4.8 4 L0.8 7.2 Z" fill="#fff" stroke="#1e1e1e" stroke-width="1"/></svg><svg style="left:786.5px;top:316.7px" width="5" height="5" viewBox="0 0 5 5"><path d="M2.5 0.3 V4.7 M0.3 2.5 H4.7" stroke="#388a34" stroke-width="1.1"/></svg><svg style="left:792.5px;top:314.9px" width="10" height="8" viewBox="0 0 10 8"><path d="M5 2.2 C3.6 0.6 0.8 1.4 0.8 4 C0.8 6.6 3.6 7.4 5 5.8" fill="none" stroke="#388a34" stroke-width="1.5"/><rect x="6" y="1.6" width="3.4" height="3.2" fill="#388a34"/></svg><svg style="left:762.5px;top:328.2px" width="6" height="8" viewBox="0 0 6 8"><path d="M0.8 0.8 L4.8 4 L0.8 7.2 Z" fill="#fff" stroke="#1e1e1e" stroke-width="1"/></svg><svg style="left:773px;top:329.7px" width="5" height="7" viewBox="0 0 5 7"><rect x="0.2" y="2.8" width="4.4" height="3.8" fill="#48a6ec"/><path d="M1.2 2.8 V1.8 C1.2 0.4 3.6 0.4 3.6 1.8 V2.8" fill="none" stroke="#48a6ec" stroke-width="0.9"/></svg><svg style="left:778.5px;top:327.2px" width="10" height="10" viewBox="0 0 10 10"><path d="M3.4 0.8 H8.6 M3.4 0.8 V6 M7.4 0.8 V8.4 C7.4 9.6 5.6 9.6 5.6 8.6" fill="none" stroke="#333" stroke-width="1.1"/><circle cx="2.6" cy="7.4" r="1.8" fill="none" stroke="#333" stroke-width="1"/></svg><svg style="left:762.5px;top:367.8px" width="6" height="8" viewBox="0 0 6 8"><path d="M0.8 0.8 L4.8 4 L0.8 7.2 Z" fill="#fff" stroke="#1e1e1e" stroke-width="1"/></svg><svg style="left:773px;top:369.3px" width="5" height="7" viewBox="0 0 5 7"><rect x="0.2" y="2.8" width="4.4" height="3.8" fill="#48a6ec"/><path d="M1.2 2.8 V1.8 C1.2 0.4 3.6 0.4 3.6 1.8 V2.8" fill="none" stroke="#48a6ec" stroke-width="0.9"/></svg><svg style="left:779.5px;top:367.8px" width="10" height="8" viewBox="0 0 10 8"><path d="M5 2.2 C3.6 0.6 0.8 1.4 0.8 4 C0.8 6.6 3.6 7.4 5 5.8" fill="none" stroke="#388a34" stroke-width="1.5"/><rect x="6" y="1.6" width="3.4" height="3.2" fill="#388a34"/></svg>
<div class="a" style="left:742px;top:544px;width:74.5px;height:14.5px;background:#fff;border:1px solid #cccedb;border-top:none;box-sizing:border-box"></div>
<!-- right strip -->
<div class="a" style="left:996px;top:98px;width:4px;height:63.6px;background:#ccceda"></div>
<!-- tooltip -->
<div class="a" style="left:355px;top:339.4px;width:626px;height:28px;background:#f7f7f9;border:1px solid #dedee4;box-sizing:border-box;box-shadow:1px 1px 2px rgba(0,0,0,0.08)"></div>
<svg style="left:363px;top:344.5px" width="7" height="6" viewBox="0 0 7 6"><path d="M0 5.6 L3.5 0.2 L7 5.6 Z" fill="#1e1e1e"/></svg>
<svg style="left:399px;top:344.8px" width="7" height="6" viewBox="0 0 7 6"><path d="M0 0.2 L3.5 5.6 L7 0.2 Z" fill="#1e1e1e"/></svg>


<!-- status bar -->
<div class="a" style="left:0;top:581.7px;width:1000px;height:17.3px;background:#0a74c8"></div>
<div class="a" style="left:0;top:597.6px;width:1000px;height:1.4px;background:#1a2a3a"></div>
<svg style="left:3px;top:585.5px" width="11" height="9" viewBox="0 0 11 9"><path d="M2.4 0.8 H10.2 L8.4 8 H0.6 Z" fill="none" stroke="#fff" stroke-width="1.2"/></svg>
<svg style="left:768px;top:585.5px" width="8" height="9" viewBox="0 0 8 9"><path d="M4 8.8 V1.4 M0.8 4.4 L4 1 L7.2 4.4" fill="none" stroke="#fff" stroke-width="1.4"/></svg>
<svg style="left:805px;top:585.5px" width="9" height="9" viewBox="0 0 9 9"><path d="M1.6 6 L6.4 1.2 L8 2.8 L3.2 7.6 L0.8 8.4 Z" fill="#fff"/></svg>
<svg style="left:839.5px;top:585px" width="10" height="10" viewBox="0 0 10 10"><path d="M5 0.2 L9.8 5 L5 9.8 L0.2 5 Z" fill="#fff"/><path d="M4.4 3 L6.4 5 M4.4 3.2 V7" stroke="#007acc" stroke-width="0.9"/><circle cx="4.4" cy="3" r="0.9" fill="#007acc"/><circle cx="6.4" cy="5" r="0.9" fill="#007acc"/><circle cx="4.4" cy="7" r="0.9" fill="#007acc"/></svg>
<svg style="left:938px;top:585.5px" width="10" height="9" viewBox="0 0 10 9"><path d="M1.6 1.4 L5 5 L8.4 1.4 M5 5 V8" fill="none" stroke="#fff" stroke-width="1.3"/><circle cx="1.6" cy="1.6" r="1.5" fill="#fff"/><circle cx="8.4" cy="1.6" r="1.5" fill="#fff"/><circle cx="5" cy="7.6" r="1.4" fill="#fff"/></svg>
<svg style="left:978.5px;top:588.5px" width="6" height="4" viewBox="0 0 6 4"><path d="M0 3.8 L3 0.2 L6 3.8 Z" fill="#fff"/></svg>
<div class="a" style="left:918px;top:567.5px;width:16px;height:17px;border-radius:2px;background:rgba(255,255,255,0.85);box-shadow:0 0 1px rgba(120,120,120,0.6)"></div>
<!-- mouse cursor at right edge -->
<svg style="left:994.5px;top:542.5px" width="7" height="11" viewBox="0 0 7 11"><path d="M0.4 0.4 V9 L2.4 7.2 L3.8 10.4 L5.2 9.8 L3.8 6.8 H6.4 Z" fill="#111" stroke="#fff" stroke-width="0.5"/></svg>

<div class="t" style="left:400.5px;top:3.3px;font-size:9.0px;letter-spacing:-0.395px;color:#fcfcfc">16.Add connections to groups.mp4 - VLC media player</div>
<div class="t" style="left:8px;top:21.0px;font-size:9.0px;letter-spacing:-0.506px;color:#232627">Audio</div>
<div class="t" style="left:41px;top:21.0px;font-size:9.0px;letter-spacing:-0.372px;color:#232627">Video</div>
<div class="t" style="left:74px;top:21.0px;font-size:9.0px;letter-spacing:-0.254px;color:#232627">Subtitle</div>
<div class="t" style="left:115px;top:21.0px;font-size:9.0px;letter-spacing:-0.503px;color:#232627">Tools</div>
<div class="t" style="left:146px;top:21.0px;font-size:9.0px;letter-spacing:-0.465px;color:#232627">View</div>
<div class="t" style="left:176px;top:21.0px;font-size:9.0px;letter-spacing:-0.454px;color:#232627">Help</div>
<div class="t" style="left:31px;top:42.7px;font-size:9.3px;letter-spacing:-0.220px;color:#777">ExploreCalifornia - Microsoft Visual Studio</div>
<div class="t" style="left:7px;top:60.0px;font-size:9.3px;letter-spacing:-0.496px;color:#1e1e1e">File</div>
<div class="t" style="left:34px;top:60.0px;font-size:9.3px;letter-spacing:-0.258px;color:#1e1e1e">Edit</div>
<div class="t" style="left:64px;top:60.0px;font-size:9.3px;letter-spacing:-0.496px;color:#1e1e1e">View</div>
<div class="t" style="left:97px;top:60.0px;font-size:9.3px;letter-spacing:-0.277px;color:#1e1e1e">Project</div>
<div class="t" style="left:139px;top:60.0px;font-size:9.3px;letter-spacing:-0.237px;color:#1e1e1e">Build</div>
<div class="t" style="left:173px;top:60.0px;font-size:9.3px;letter-spacing:-0.281px;color:#1e1e1e">Debug</div>
<div class="t" style="left:214px;top:60.0px;font-size:9.3px;letter-spacing:-0.434px;color:#1e1e1e">Team</div>
<div class="t" style="left:250px;top:60.0px;font-size:9.3px;letter-spacing:-0.241px;color:#1e1e1e">Tools</div>
<div class="t" style="left:285px;top:60.0px;font-size:9.3px;letter-spacing:-0.266px;color:#1e1e1e">Test</div>
<div class="t" style="left:316px;top:60.0px;font-size:9.3px;letter-spacing:-0.440px;color:#1e1e1e">Analyze</div>
<div class="t" style="left:360px;top:60.0px;font-size:9.3px;letter-spacing:-0.013px;color:#1e1e1e">Window</div>
<div class="t" style="left:408px;top:60.0px;font-size:9.3px;letter-spacing:-0.281px;color:#1e1e1e">Help</div>
<div class="t" style="left:780px;top:40.2px;font-size:9.2px;letter-spacing:-0.174px;color:#767676">Quick Launch (Ctrl+Q)</div>
<div class="t" style="left:937px;top:60.1px;font-size:9.3px;letter-spacing:-0.277px;color:#1e1e1e">Sign in</div>
<div class="t" style="left:205px;top:77.3px;font-size:9.2px;letter-spacing:-0.416px;color:#1e1e1e">Debug</div>
<div class="t" style="left:257px;top:77.3px;font-size:9.2px;letter-spacing:-0.542px;color:#1e1e1e">Any CPU</div>
<div class="t" style="left:354.5px;top:77.3px;font-size:9.2px;letter-spacing:-0.680px;color:#1e1e1e">IIS Express</div>
<div class="t" style="left:25px;top:99.5px;font-size:9.2px;letter-spacing:-0.286px;color:#fff">InMemoryChatRoomService.cs*</div>
<div class="t" style="left:184px;top:99.5px;font-size:9.2px;letter-spacing:-0.332px;color:#1e1e1e">ChatRoom.cs</div>
<div class="t" style="left:272px;top:99.5px;font-size:9.2px;letter-spacing:-0.376px;color:#1e1e1e">IChatRoomService.cs</div>
<div class="t" style="left:390px;top:99.5px;font-size:9.2px;letter-spacing:-0.252px;color:#1e1e1e">ChatHub.cs</div>
<div class="t" style="left:38.5px;top:115.3px;font-size:9.2px;letter-spacing:-0.322px;color:#1e1e1e">ExploreCalifornia</div>
<div class="t" style="left:277px;top:115.3px;font-size:9.2px;letter-spacing:-0.334px;color:#1e1e1e">ExploreCalifornia.Services.InMemoryChatRoomService</div>
<div class="t" style="left:516px;top:115.3px;font-size:9.2px;letter-spacing:-0.174px;color:#1e1e1e">GetRoomForConnectionId(string connectionId)</div>
<div class="t" style="left:25px;top:547.0px;font-size:8.8px;letter-spacing:-0.791px;color:#1e1e1e">100 %</div>
<div class="t" style="left:22px;top:564.2px;font-size:9.2px;letter-spacing:0.068px;color:#444">Output</div>
<div class="t" style="left:59px;top:564.2px;font-size:9.2px;letter-spacing:-0.128px;color:#444">Web Publish Activity</div>
<div class="t" style="left:20px;top:585.2px;font-size:9.2px;letter-spacing:-0.613px;color:#fff">Ready</div>
<div class="t" style="left:441px;top:585.2px;font-size:9.0px;letter-spacing:-0.406px;color:#fff">Ln 28</div>
<div class="t" style="left:509px;top:585.2px;font-size:9.0px;letter-spacing:-0.086px;color:#fff">Col 17</div>
<div class="t" style="left:577px;top:585.2px;font-size:9.0px;letter-spacing:-0.506px;color:#fff">Ch 17</div>
<div class="t" style="left:677px;top:585.2px;font-size:9.0px;letter-spacing:-0.505px;color:#fff">INS</div>
<div class="t" style="left:781px;top:585.2px;font-size:9.2px;letter-spacing:0.375px;color:#fff">0</div>
<div class="t" style="left:818px;top:585.2px;font-size:9.2px;letter-spacing:0.375px;color:#fff">5</div>
<div class="t" style="left:855px;top:585.2px;font-size:9.2px;letter-spacing:-0.233px;color:#fff">ExploreCalifornia</div>
<div class="t" style="left:953px;top:585.2px;font-size:9.2px;letter-spacing:-0.713px;color:#fff">03_02</div>
<div class="t" style="left:745.5px;top:100.6px;font-size:9.2px;letter-spacing:-0.263px;color:#444">Solution Explorer</div>
<div class="t" style="left:746.5px;top:137.4px;font-size:9.2px;letter-spacing:-0.273px;color:#6d6d6d">Search Solution Explorer (Ctrl+;)</div>
<div class="t" style="left:746px;top:546.2px;font-size:9.2px;letter-spacing:-0.233px;color:#0e70c0">Solution Explorer</div>
<div class="t" style="left:821px;top:546.2px;font-size:9.2px;letter-spacing:-0.403px;color:#333">Team Explorer</div>
<div class="t" style="left:767px;top:154.5px;font-size:9.2px;letter-spacing:-0.179px;color:#1e1e1e;">Solution 'ExploreCalifornia' (1 project)</div>
<div class="t" style="left:780px;top:167.7px;font-size:9.2px;letter-spacing:-0.416px;color:#1e1e1e;font-weight:bold;">ExploreCalifornia</div>
<div class="t" style="left:793.5px;top:180.9px;font-size:9.2px;letter-spacing:-0.374px;color:#1e1e1e;">Connected Services</div>
<div class="t" style="left:793.5px;top:194.2px;font-size:9.2px;letter-spacing:-0.354px;color:#1e1e1e;">Dependencies</div>
<div class="t" style="left:793.5px;top:207.4px;font-size:9.2px;letter-spacing:-0.338px;color:#1e1e1e;">Properties</div>
<div class="t" style="left:793.5px;top:220.6px;font-size:9.2px;letter-spacing:-0.036px;color:#1e1e1e;">wwwroot</div>
<div class="t" style="left:793.5px;top:233.8px;font-size:9.2px;letter-spacing:-0.188px;color:#1e1e1e;">Models</div>
<div class="t" style="left:806.5px;top:247.0px;font-size:9.2px;letter-spacing:-0.424px;color:#1e1e1e;">ChatMessage.cs</div>
<div class="t" style="left:806.5px;top:260.3px;font-size:9.2px;letter-spacing:-0.332px;color:#1e1e1e;">ChatRoom.cs</div>
<div class="t" style="left:793.5px;top:273.5px;font-size:9.2px;letter-spacing:-0.713px;color:#1e1e1e;">Pages</div>
<div class="t" style="left:793.5px;top:286.7px;font-size:9.2px;letter-spacing:-0.592px;color:#1e1e1e;">Services</div>
<div class="t" style="left:806.5px;top:299.9px;font-size:9.2px;letter-spacing:-0.413px;color:#1e1e1e;">IChatRoomService.cs</div>
<div class="t" style="left:806.5px;top:313.1px;font-size:9.2px;letter-spacing:-0.294px;color:#1e1e1e;">InMemoryChatRoomService.cs</div>
<div class="t" style="left:793.5px;top:326.4px;font-size:9.2px;letter-spacing:-0.244px;color:#1e1e1e;">appsettings.json</div>
<div class="t" style="left:793.5px;top:366.0px;font-size:9.2px;letter-spacing:-0.388px;color:#1e1e1e;">Startup.cs</div>
<div class="t" style="left:375px;top:342.0px;font-size:8.9px;letter-spacing:-0.453px;color:#1e1e1e">1 of 2</div>
<div class="t" style="left:412px;top:342.0px;font-size:8.9px;letter-spacing:-0.103px;color:#1e1e1e">(extension) <i>KeyValuePair</i>&lt;<i>Guid</i>, <i>ChatRoom</i>&gt; <i>IEnumerable</i>&lt;<i>KeyValuePair</i>&lt;<i>Guid</i>, <i>ChatRoom</i>&gt;&gt;.FirstOrDefault&lt;<i>KeyValuePair</i>&lt;<i>Guid</i>, <i>ChatRoom</i>&gt;&gt;()</div>
<div class="t" style="left:412px;top:353.3px;font-size:8.9px;letter-spacing:-0.087px;color:#1e1e1e">Returns the first element of a sequence, or a default value if the sequence contains no elements.</div>
<div class="t" style="left:18.2px;top:98.4px;transform-origin:0 0;transform:rotate(90deg);font-size:9.2px;letter-spacing:-0.509px;color:#444">Server Explorer</div>
<div class="t" style="left:18.2px;top:163.6px;transform-origin:0 0;transform:rotate(90deg);font-size:9.2px;letter-spacing:-0.153px;color:#444">Toolbox</div>
<div class="t" style="left:993.4px;top:98.2px;transform-origin:0 0;transform:rotate(90deg);font-size:9.2px;letter-spacing:-0.196px;color:#444">Diagnostic Tools</div>
<div class="t" style="left:867px;top:570.2px;font-size:17.5px;letter-spacing:-1.068px;color:rgba(255,255,255,0.9);font-weight:bold;text-shadow:0 0 1.5px rgba(90,90,90,0.9),0 0 1px rgba(90,90,90,0.7);line-height:20px;height:20px;margin-top:-4px">Linked</div>
<div class="t" style="left:920.5px;top:571.2px;font-size:15.5px;letter-spacing:-1.391px;color:rgba(120,120,125,0.75);font-weight:bold;line-height:20px;height:20px;margin-top:-4px">in</div>
<div class="t" style="left:938px;top:570.7px;font-size:9.6px;letter-spacing:-0.006px;color:rgba(255,255,255,0.9);text-shadow:0 0 1.2px rgba(90,90,90,0.9),0 0 1px rgba(90,90,90,0.7);">LEARNING</div>
</body></html>
